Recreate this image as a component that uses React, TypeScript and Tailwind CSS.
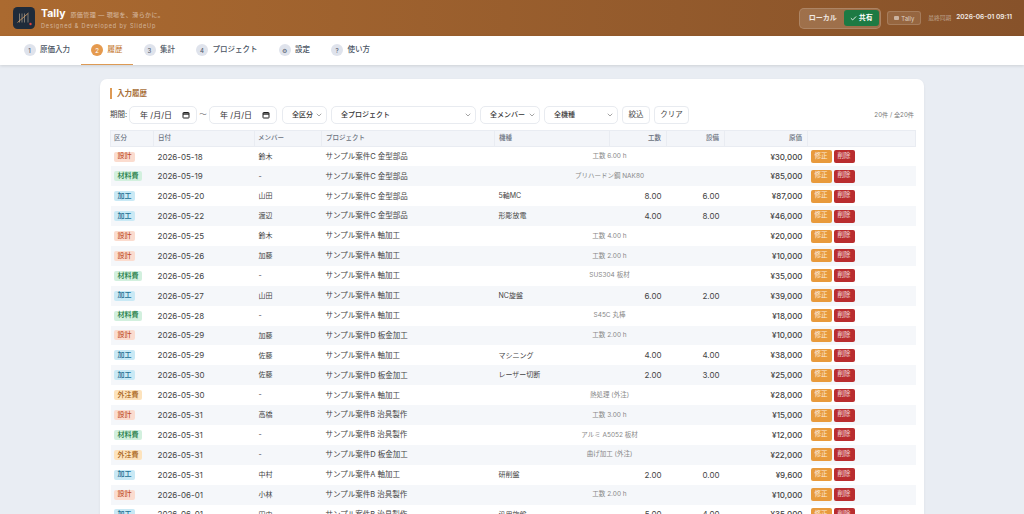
import React from 'react';
import { Check, ChevronDown } from 'lucide-react';

type Kind = '設計' | '材料費' | '加工' | '外注費';

const rows: { kind: Kind; date: string; member: string; project: string; machine?: string; hours?: string; equip?: string; note?: string; cost: string }[] = [
    { kind: '設計', date: '2026-05-18', member: '鈴木', project: 'サンプル案件C 金型部品', note: '工数 6.00 h', cost: '¥30,000' },
    { kind: '材料費', date: '2026-05-19', member: '-', project: 'サンプル案件C 金型部品', note: 'プリハードン鋼 NAK80', cost: '¥85,000' },
    { kind: '加工', date: '2026-05-20', member: '山田', project: 'サンプル案件C 金型部品', machine: '5軸MC', hours: '8.00', equip: '6.00', cost: '¥87,000' },
    { kind: '加工', date: '2026-05-22', member: '渡辺', project: 'サンプル案件C 金型部品', machine: '形彫放電', hours: '4.00', equip: '8.00', cost: '¥46,000' },
    { kind: '設計', date: '2026-05-25', member: '鈴木', project: 'サンプル案件A 軸加工', note: '工数 4.00 h', cost: '¥20,000' },
    { kind: '設計', date: '2026-05-26', member: '加藤', project: 'サンプル案件A 軸加工', note: '工数 2.00 h', cost: '¥10,000' },
    { kind: '材料費', date: '2026-05-26', member: '-', project: 'サンプル案件A 軸加工', note: 'SUS304 板材', cost: '¥35,000' },
    { kind: '加工', date: '2026-05-27', member: '山田', project: 'サンプル案件A 軸加工', machine: 'NC旋盤', hours: '6.00', equip: '2.00', cost: '¥39,000' },
    { kind: '材料費', date: '2026-05-28', member: '-', project: 'サンプル案件A 軸加工', note: 'S45C 丸棒', cost: '¥18,000' },
    { kind: '設計', date: '2026-05-29', member: '加藤', project: 'サンプル案件D 板金加工', note: '工数 2.00 h', cost: '¥10,000' },
    { kind: '加工', date: '2026-05-29', member: '佐藤', project: 'サンプル案件A 軸加工', machine: 'マシニング', hours: '4.00', equip: '4.00', cost: '¥38,000' },
    { kind: '加工', date: '2026-05-30', member: '佐藤', project: 'サンプル案件D 板金加工', machine: 'レーザー切断', hours: '2.00', equip: '3.00', cost: '¥25,000' },
    { kind: '外注費', date: '2026-05-30', member: '-', project: 'サンプル案件A 軸加工', note: '熱処理 (外注)', cost: '¥28,000' },
    { kind: '設計', date: '2026-05-31', member: '高橋', project: 'サンプル案件B 治具製作', note: '工数 3.00 h', cost: '¥15,000' },
    { kind: '材料費', date: '2026-05-31', member: '-', project: 'サンプル案件B 治具製作', note: 'アルミ A5052 板材', cost: '¥12,000' },
    { kind: '外注費', date: '2026-05-31', member: '-', project: 'サンプル案件D 板金加工', note: '曲げ加工 (外注)', cost: '¥22,000' },
    { kind: '加工', date: '2026-05-31', member: '中村', project: 'サンプル案件A 軸加工', machine: '研削盤', hours: '2.00', equip: '0.00', cost: '¥9,600' },
    { kind: '設計', date: '2026-06-01', member: '小林', project: 'サンプル案件B 治具製作', note: '工数 2.00 h', cost: '¥10,000' },
    { kind: '加工', date: '2026-06-01', member: '田中', project: 'サンプル案件B 治具製作', machine: '汎用旋盤', hours: '5.00', equip: '4.00', cost: '¥35,000' },
];

const badge: Record<Kind, string> = {
    '設計': 'bg-[#fbdccf] text-[#c2502a]',
    '材料費': 'bg-[#d2f0de] text-[#1f7a45]',
    '加工': 'bg-[#c9e9f5] text-[#1c6f93]',
    '外注費': 'bg-[#fde3bd] text-[#a8641a]',
};

const tabs = [
    { no: '1', label: '原価入力' },
    { no: '2', label: '履歴', active: true },
    { no: '3', label: '集計' },
    { no: '4', label: 'プロジェクト' },
    { no: '⚙', label: '設定' },
    { no: '?', label: '使い方' },
];

function DateBox() {
    return (
        <div className="w-[68px] h-[18px] bg-white border border-[#e8ebf0] rounded-[5px] flex items-center pl-[10px] pr-[6px] text-[8px] text-[#333] whitespace-nowrap">
            <span>年 /月/日</span>
            <svg className="ml-auto" width="8" height="8" viewBox="0 0 8 8" fill="none" stroke="#222" strokeWidth="1">
                <rect x="1" y="1.5" width="6" height="5.5" rx="0.5" />
                <path d="M1 3h6" strokeWidth="1.4" />
            </svg>
        </div>
    );
}

function SelectBox({ label, width }: { label: string; width: string }) {
    return (
        <div className={`${width} h-[18px] bg-white border border-[#e8ebf0] rounded-[5px] flex items-center pl-[9px] pr-[3px] text-[7px] font-medium text-[#333] whitespace-nowrap`}>
            <span>{label}</span>
            <ChevronDown className="ml-auto text-[#777]" size={8} />
        </div>
    );
}

function TallyLogo() {
    return (
        <svg width="22" height="22" viewBox="0 0 22 22" className="shrink-0">
            <rect width="22" height="22" rx="4.5" fill="#1f2b3a" />
            <path d="M6.5 6.5v9M9 6.5v9M11.5 6.5v9M15 6.5v9" stroke="#a89c8c" strokeWidth="0.7" />
            <path d="M4.5 15.5 15.5 6" stroke="#d9a066" strokeWidth="0.8" />
            <circle cx="17.5" cy="17" r="1.2" fill="#e0453a" />
        </svg>
    );
}

export default function App() {
    return (
        <div className="h-[514px] overflow-hidden bg-[#e9edf3] text-[#333] [font-family:Inter,'Noto_Sans_CJK_JP',sans-serif]">
            {/* Header */}
            <header className="h-[36px] bg-gradient-to-r from-[#ab6a30] to-[#87522a] flex items-center pl-[13px] pr-[12px] text-white">
                <TallyLogo />
                <div className="ml-[6px]">
                    <div className="flex items-baseline gap-[5px] leading-[13px]">
                        <span className="text-[10.5px] font-bold">Tally</span>
                        <span className="text-[6px] text-white/55 tracking-[0.4px]">原価管理 — 現場を、滑らかに。</span>
                    </div>
                    <div className="text-[5.5px] leading-[8px] mt-[1px] text-white/50 tracking-[0.85px]">Designed &amp; Developed by SlideUp</div>
                </div>
                <div className="ml-auto flex items-center">
                    <div className="h-[21px] w-[82px] bg-white/15 border border-white/15 rounded-[5px] flex items-center p-[1.5px] text-[7px] font-semibold whitespace-nowrap">
                        <span className="w-[43px] text-center text-white/85">ローカル</span>
                        <span className="w-[36px] h-[16px] bg-[#1d7a43] rounded-[3px] flex items-center justify-center gap-[2px]">
                            <Check size={7} strokeWidth={3} />
                            共有
                        </span>
                    </div>
                    <div className="ml-[6px] h-[14px] w-[34px] bg-white/10 border border-white/15 rounded-[3px] flex items-center justify-center gap-[2px] text-[6px] text-white/70">
                        <span className="w-[5px] h-[4px] bg-white/50 rounded-[1px]" />
                        Tally
                    </div>
                    <span className="ml-[7px] text-[5.75px] text-white/45">最終同期</span>
                    <span className="ml-[5px] text-[6.5px] font-semibold text-white/90 whitespace-nowrap">2026-06-01 09:11</span>
                </div>
            </header>

            {/* Tabs */}
            <nav className="h-[29px] bg-white shadow-[0_1px_3px_rgba(0,0,0,0.12)] flex pl-[13px] relative">
                {tabs.map((tab) => (
                    <div
                        key={tab.label}
                        className={`h-[29px] px-[10.5px] flex items-center gap-[4.5px] text-[7.5px] font-medium border-b-[1.5px] whitespace-nowrap ${tab.active ? 'border-[#dd9a55] text-[#c8813b]' : 'border-transparent text-[#4b5563]'}`}
                    >
                        <span className={`w-[12px] h-[12px] rounded-full flex items-center justify-center text-[6px] ${tab.active ? 'bg-[#e59a4e] text-white' : 'bg-[#dfe3ec] text-[#555f70]'}`}>
                            {tab.no}
                        </span>
                        {tab.label}
                    </div>
                ))}
            </nav>

            {/* Card */}
            <main className="px-[100px] pt-[14px]">
                <section className="bg-white rounded-[7px] shadow-[0_1px_3px_rgba(0,0,0,0.06)] px-[10px] pt-[9px] pb-4">
                    <h2 className="border-l-[2px] border-[#dd9a55] pl-[5px] h-[11px] flex items-center text-[7.5px] font-semibold text-[#a9713a]">入力履歴</h2>
                    <div className="mt-[7px] flex items-center text-[7.5px] text-[#444] whitespace-nowrap">
                        <span className="w-[19px]">期間:</span>
                        <DateBox />
                        <span className="w-[12px] text-center text-[#666]">〜</span>
                        <DateBox />
                        <div className="ml-[5px] flex items-center gap-[4px]">
                            <SelectBox label="全区分" width="w-[45px]" />
                            <SelectBox label="全プロジェクト" width="w-[145px]" />
                            <SelectBox label="全メンバー" width="w-[60px]" />
                            <SelectBox label="全機種" width="w-[74px]" />
                            <div className="w-[28px] h-[18px] border border-[#e8ebf0] rounded-[4px] flex items-center justify-center">絞込</div>
                            <div className="w-[35px] h-[18px] border border-[#e8ebf0] rounded-[4px] flex items-center justify-center">クリア</div>
                        </div>
                        <span className="ml-auto text-[6.2px] text-[#777]">20件 / 全20件</span>
                    </div>

                    <table className="mt-[6px] w-[805px] table-fixed border-collapse text-[8px]">
                        <colgroup>
                            <col className="w-[43px]" />
                            <col className="w-[101px]" />
                            <col className="w-[67px]" />
                            <col className="w-[173px]" />
                            <col className="w-[115px]" />
                            <col className="w-[57px]" />
                            <col className="w-[58px]" />
                            <col className="w-[83px]" />
                            <col className="w-[108px]" />
                        </colgroup>
                        <thead>
                            <tr className="h-[16px] bg-[#f3f5f9] text-[6.5px] text-[#6b7280]">
                                <th className="font-medium text-left pl-[3px] border border-[#e9ecf2]">区分</th>
                                <th className="font-medium text-left pl-[4px] border border-[#e9ecf2]">日付</th>
                                <th className="font-medium text-left pl-[3px] border border-[#e9ecf2]">メンバー</th>
                                <th className="font-medium text-left pl-[4px] border border-[#e9ecf2]">プロジェクト</th>
                                <th className="font-medium text-left pl-[4px] border border-[#e9ecf2]">機種</th>
                                <th className="font-medium text-right pr-[5px] border border-[#e9ecf2]">工数</th>
                                <th className="font-medium text-right pr-[5px] border border-[#e9ecf2]">設備</th>
                                <th className="font-medium text-right pr-[5px] border border-[#e9ecf2]">原価</th>
                                <th className="border border-[#e9ecf2]" />
                            </tr>
                        </thead>
                        <tbody>
                            {rows.map((row, i) => (
                                <tr key={i} className={`h-[19.9px] ${i % 2 === 1 ? 'bg-[#f5f7fa]' : 'bg-white'}`}>
                                    <td className="pl-[3.5px]">
                                        <span className={`flex w-fit h-[10px] px-[3.5px] items-center rounded-[2px] text-[7px] font-medium ${badge[row.kind]}`}>{row.kind}</span>
                                    </td>
                                    <td className="pl-[4px] text-[#444]">{row.date}</td>
                                    <td className="pl-[4px] pt-[1px] text-[#444] text-[7px]">{row.member}</td>
                                    <td className="pl-[4px] text-[#444] text-[7.5px]">{row.project}</td>
                                    {row.note ? (
                                        <td colSpan={3} className="pt-[1px] text-center text-[6.5px] text-[#888]">{row.note}</td>
                                    ) : (
                                        <>
                                            <td className="pl-[4px] pt-[1px] text-[#444] text-[7px]">{row.machine}</td>
                                            <td className="pr-[5px] text-right text-[#444]">{row.hours}</td>
                                            <td className="pr-[5px] text-right text-[#444]">{row.equip}</td>
                                        </>
                                    )}
                                    <td className="pr-[5px] text-right font-medium text-[#444]">{row.cost}</td>
                                    <td className="pl-[3px]">
                                        <div className="flex gap-[2px]">
                                            <span className="w-[21px] h-[13px] rounded-[2px] bg-[#e89a3c] text-white/80 text-[6.5px] flex items-center justify-center">修正</span>
                                            <span className="w-[21px] h-[13px] rounded-[2px] bg-[#b92d2f] text-white/80 text-[6.5px] flex items-center justify-center">削除</span>
                                        </div>
                                    </td>
                                </tr>
                            ))}
                        </tbody>
                    </table>
                </section>
            </main>
        </div>
    );
}
